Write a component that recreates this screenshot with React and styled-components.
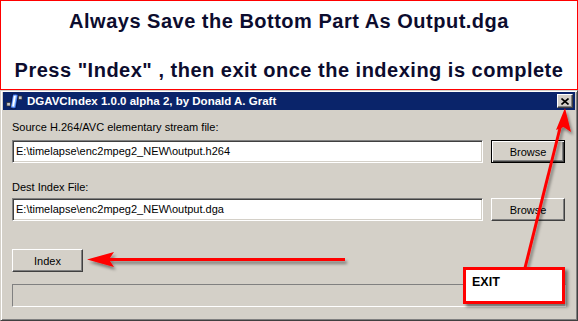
import React from 'react'
import styled, { createGlobalStyle } from 'styled-components'

const GlobalStyle = createGlobalStyle`
  html, body {
    margin: 0;
    padding: 0;
    background: #ffffff;
  }
  body {
    font-family: "Liberation Sans", Arial, sans-serif;
  }
`

const Page = styled.div`
  position: relative;
  width: 578px;
  height: 321px;
  overflow: hidden;
`
const Banner = styled.div`
  box-sizing: border-box;
  height: 90px;
  border: 1px solid #ff0000;
  background: #ffffff;
  display: flex;
  flex-direction: column;
  align-items: center;
  padding-top: 9px;
  gap: 26px;
`
const BannerLine = styled.div`
  font-size: 20px;
  line-height: 23px;
  font-weight: bold;
  color: #0c0c2e;
  white-space: nowrap;
  letter-spacing: 0.5px;
`
const Window = styled.div`
  box-sizing: border-box;
  height: 231px;
  background: #d4d0c8;
  border: 1px solid;
  border-color: #d4d0c8 #404040 #404040 #d4d0c8;
  box-shadow: inset 1px 1px #ffffff, inset -1px -1px #808080;
  padding: 1px 2px 2px 2px;
  display: flex;
  flex-direction: column;
`
const TitleBar = styled.div`
  height: 18px;
  background: #0a246a;
  display: flex;
  align-items: center;
  padding: 0 2px 0 3px;
`
const IconSlot = styled.div`
  flex-shrink: 0;
  width: 17px;
  height: 17px;
  display: flex;
`
const TitleText = styled.span`
  flex: 1;
  margin-left: 4px;
  color: #ffffff;
  font-size: 11.5px;
  font-weight: bold;
  white-space: nowrap;
`
const CloseButton = styled.div`
  flex-shrink: 0;
  box-sizing: border-box;
  width: 16px;
  height: 14px;
  background: #d4d0c8;
  border: 1px solid;
  border-color: #ffffff #404040 #404040 #ffffff;
  box-shadow: inset -1px -1px #808080;
  display: flex;
  align-items: center;
  justify-content: center;
`
const Body = styled.div`
  display: flex;
  flex-direction: column;
  padding: 0 9px;
`
const Label = styled.div`
  font-size: 11px;
  line-height: 13px;
  color: #000000;
  margin-top: ${props => props.top}px;
`
const Row = styled.div`
  display: flex;
  gap: 8px;
  margin-top: ${props => props.top}px;
`
const Field = styled.div`
  box-sizing: border-box;
  width: 471px;
  height: 23px;
  background: #ffffff;
  border: 1px solid;
  border-color: #808080 #ffffff #ffffff #808080;
  box-shadow: inset 1px 1px #404040, inset -1px -1px #d4d0c8;
  padding: 0 3px;
  font-size: 11px;
  line-height: 21px;
  color: #000000;
  white-space: nowrap;
`
const Button = styled.div`
  box-sizing: border-box;
  width: ${props => props.width}px;
  height: 23px;
  background: #d4d0c8;
  border: 1px solid;
  border-color: ${props => props.primary
    ? '#000000'
    : '#ffffff #404040 #404040 #ffffff'};
  box-shadow: ${props => props.primary
    ? 'inset 1px 1px #ffffff, inset -1px -1px #404040, inset -2px -2px #808080'
    : 'inset -1px -1px #808080'};
  font-size: 11px;
  color: #000000;
  display: flex;
  align-items: center;
  justify-content: center;
`
const Progress = styled.div`
  box-sizing: border-box;
  height: 23px;
  border: 1px solid;
  border-color: #808080 #ffffff #ffffff #808080;
  margin-top: ${props => props.top}px;
`
const ExitBox = styled.div`
  position: absolute;
  left: 463px;
  top: 267px;
  box-sizing: border-box;
  width: 102px;
  height: 37px;
  background: #ffffff;
  border: 3px solid #ff0000;
  box-shadow: 3px 3px 3px rgba(0, 0, 0, 0.45);
  padding: 5px 0 0 6px;
  font-size: 12.5px;
  font-weight: bold;
  color: #000000;
`
const Overlay = styled.svg`
  position: absolute;
  left: 0;
  top: 0;
  pointer-events: none;
`

const AppIcon = () => (
  <svg width="17" height="17" viewBox="0 0 17 17">
    <path d="M6.5 1 Q9.5 0 12.5 1.5 L10 15.5 Q7 16.5 4 15 Z" fill="#2a56c6" stroke="#08174a" strokeWidth="1" />
    <path d="M7.3 2.2 Q9.5 1.6 11.2 2.5 L9 14.3 Q7 14.9 5.3 14.1 Z" fill="#7fb0ff" />
    <path d="M7.9 3 L9.8 2.8 L8 13.4 L6.3 13.3 Z" fill="#ffffff" />
    <rect x="12.5" y="3" width="3.5" height="3.5" fill="#c8c8c8" stroke="#303030" strokeWidth="0.7" />
    <rect x="0.8" y="9.5" width="3.5" height="3.5" fill="#c8c8c8" stroke="#303030" strokeWidth="0.7" />
  </svg>
)

const CloseGlyph = () => (
  <svg width="8" height="7" viewBox="0 0 8 7">
    <path d="M0.5 0.5 L7.5 6.5 M7.5 0.5 L0.5 6.5" stroke="#000000" strokeWidth="1.6" />
  </svg>
)

const Arrows = () => (
  <Overlay width="578" height="321" viewBox="0 0 578 321">
    <defs>
      <filter id="shade" x="-20%" y="-20%" width="140%" height="140%">
        <feDropShadow dx="2" dy="3" stdDeviation="1.5" floodColor="#000000" floodOpacity="0.4" />
      </filter>
    </defs>
    <g filter="url(#shade)" fill="#ff0000" stroke="#ff0000">
      <line x1="345" y1="259.5" x2="105" y2="259.5" strokeWidth="3" />
      <path d="M87 259.5 L114 252 L109 259.5 L114 267 Z" stroke="none" />
      <line x1="525" y1="268" x2="561" y2="124" strokeWidth="3" />
      <path d="M565 108 L571 132 L563.5 127 L556 130 Z" stroke="none" />
    </g>
  </Overlay>
)

const App = () => {
  return (
    <Page>
      <GlobalStyle />
      <Banner>
        <BannerLine>Always Save the Bottom Part As Output.dga</BannerLine>
        <BannerLine>Press "Index" , then exit once the indexing is complete</BannerLine>
      </Banner>
      <Window>
        <TitleBar>
          <IconSlot>
            <AppIcon />
          </IconSlot>
          <TitleText>DGAVCIndex 1.0.0 alpha 2, by Donald A. Graft</TitleText>
          <CloseButton>
            <CloseGlyph />
          </CloseButton>
        </TitleBar>
        <Body>
          <Label top={11}>Source H.264/AVC elementary stream file:</Label>
          <Row top={6}>
            <Field>E:\timelapse\enc2mpeg2_NEW\output.h264</Field>
            <Button width={74} primary>Browse</Button>
          </Row>
          <Label top={18}>Dest Index File:</Label>
          <Row top={4}>
            <Field>E:\timelapse\enc2mpeg2_NEW\output.dga</Field>
            <Button width={74}>Browse</Button>
          </Row>
          <Row top={28}>
            <Button width={71}>Index</Button>
          </Row>
          <Progress top={12} />
        </Body>
      </Window>
      <Arrows />
      <ExitBox>EXIT</ExitBox>
    </Page>
  )
}

export default App
